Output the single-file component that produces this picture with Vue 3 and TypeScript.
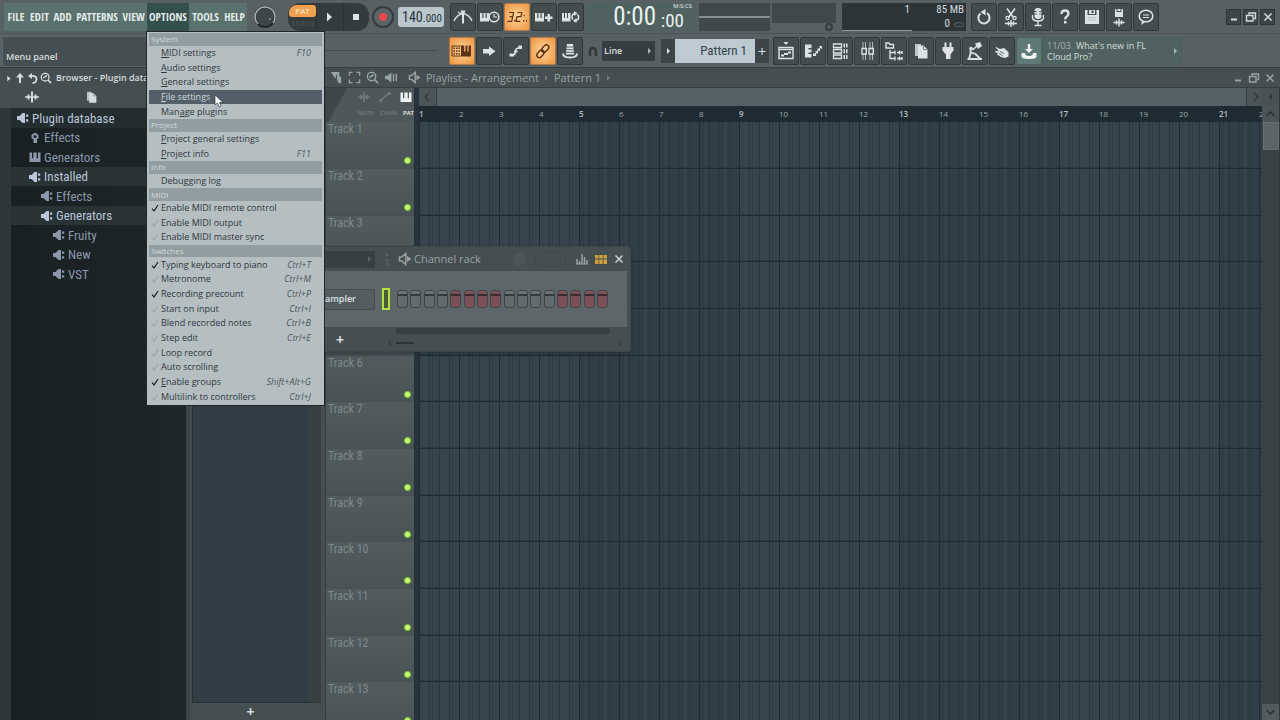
<script setup lang="ts">
interface MenuEntry {
  label: string
  keys?: string
  check?: boolean
  key?: number
}
interface MenuGroup {
  title: string
  items: MenuEntry[]
}
interface TreeRow {
  label: string
  icon: string
  level: number
  lit?: boolean
  open?: boolean
}

const mainMenu: string[] = ['FILE', 'EDIT', 'ADD', 'PATTERNS', 'VIEW', 'OPTIONS', 'TOOLS', 'HELP']

const groups: MenuGroup[] = [
  {
    title: 'System',
    items: [
      { label: 'MIDI settings', keys: 'F10', key: 0 },
      { label: 'Audio settings', key: 0 },
      { label: 'General settings', key: 0 },
      { label: 'File settings', key: 0 },
      { label: 'Manage plugins', key: 3 },
    ],
  },
  {
    title: 'Project',
    items: [
      { label: 'Project general settings', key: 0 },
      { label: 'Project info', keys: 'F11', key: 0 },
    ],
  },
  { title: 'Info', items: [{ label: 'Debugging log' }] },
  {
    title: 'MIDI',
    items: [
      { label: 'Enable MIDI remote control', check: true },
      { label: 'Enable MIDI output', check: false },
      { label: 'Enable MIDI master sync', check: false },
    ],
  },
  {
    title: 'Switches',
    items: [
      { label: 'Typing keyboard to piano', keys: 'Ctrl+T', check: true },
      { label: 'Metronome', keys: 'Ctrl+M', check: false },
      { label: 'Recording precount', keys: 'Ctrl+P', check: true },
      { label: 'Start on input', keys: 'Ctrl+I', check: false },
      { label: 'Blend recorded notes', keys: 'Ctrl+B', check: false },
      { label: 'Step edit', keys: 'Ctrl+E', check: false },
      { label: 'Loop record', check: false },
      { label: 'Auto scrolling', check: false },
      { label: 'Enable groups', keys: 'Shift+Alt+G', check: true, key: 0 },
      { label: 'Multilink to controllers', keys: 'Ctrl+J', check: false },
    ],
  },
]

const tree: TreeRow[] = [
  { label: 'Plugin database', icon: 'plug', level: 0, lit: true },
  { label: 'Effects', icon: 'fx', level: 1 },
  { label: 'Generators', icon: 'piano', level: 1 },
  { label: 'Installed', icon: 'plug', level: 1, lit: true, open: true },
  { label: 'Effects', icon: 'plug', level: 2 },
  { label: 'Generators', icon: 'plug', level: 2, lit: true, open: true },
  { label: 'Fruity', icon: 'plug', level: 3 },
  { label: 'New', icon: 'plug', level: 3 },
  { label: 'VST', icon: 'plug', level: 3 },
]

const recTools = [
  { icon: 'metro', name: 'Metronome' },
  { icon: 'wait', name: 'Wait for input' },
  { icon: 'count', name: 'Countdown', on: true },
  { icon: 'overdub', name: 'Overdub' },
  { icon: 'loop', name: 'Loop recording' },
]
const editTools = [
  { icon: 'typing', name: 'Typing keyboard', on: true },
  { icon: 'arrow', name: 'Step' },
  { icon: 'slide', name: 'Slide' },
  { icon: 'link', name: 'Link', on: true },
  { icon: 'hat', name: 'Multilink' },
]
const fileTools = [
  { icon: 'undo', name: 'Undo' },
  { icon: 'cut', name: 'Cut' },
  { icon: 'mic', name: 'Record audio' },
  { icon: 'help', name: 'Help' },
  { icon: 'save', name: 'Save' },
  { icon: 'render', name: 'Render' },
  { icon: 'chat', name: 'About' },
]
const viewTools = [
  { icon: 'playlist', name: 'Playlist' },
  { icon: 'roll', name: 'Piano roll' },
  { icon: 'rack', name: 'Channel rack' },
  { icon: 'mixer', name: 'Mixer' },
  { icon: 'browse', name: 'Browser' },
  { icon: 'file', name: 'Project' },
  { icon: 'plugv', name: 'Plugins' },
  { icon: 'tempo', name: 'Tempo tapper' },
  { icon: 'hand', name: 'Touch' },
]

const tracks: number[] = Array.from({ length: 13 }, (_, i) => i + 1)
const bars: number[] = Array.from({ length: 22 }, (_, i) => i + 1)
const steps: number[] = Array.from({ length: 16 }, (_, i) => i)
</script>

<template>
  <div class="daw">
    <svg class="defs" aria-hidden="true">
      <symbol id="i-metro" viewBox="0 0 24 24"><path d="M3 16Q6 9.500 12 8.500Q18 9.500 21 16M7 7l4 2.500" fill="none" stroke="currentColor" stroke-width="1.300" /><path d="M9.500 5.500h5l-1.500 4v9h-2v-9z" fill="currentColor" /></symbol>
      <symbol id="i-wait" viewBox="0 0 24 24"><path d="M2 8h2.300v5h1.200V8h2v5h1.200V8H11v8.500H2z" fill="currentColor" /><circle cx="16" cy="12" r="4.800" fill="none" stroke="currentColor" stroke-width="1.500" /><path d="M16 9v3h3" fill="none" stroke="currentColor" stroke-width="1.200" /></symbol>
      <symbol id="i-count" viewBox="0 0 24 24"><g fill="none" stroke="currentColor" stroke-width="1.200"><path d="M4 7.500h4.500l-.8 4.200H4.500M7.700 11.700l-1 4.600H2.500M12.500 7.500h4.300l-.8 4.200h-4l-.9 4.600h4.200" /></g><path d="M9 15h1.500v1.500H9zM18.500 10h1.300v1.300h-1.300zM18 15h1.300v1.500H18zM21 15h1v1.500h-1z" fill="currentColor" /></symbol>
      <symbol id="i-overdub" viewBox="0 0 24 24"><path d="M3 8h2.300v5h1.200V8h2v5h1.200V8H12v8.500H3zM15.500 9h2.500v2.500h2.500V14H18v2.500h-2.500V14H13v-2.500h2.500z" fill="currentColor" /></symbol>
      <symbol id="i-loop" viewBox="0 0 24 24"><path d="M3 8h2v5h1V8h2v5h1V8h2.500v8.500H3z" fill="currentColor" /><path d="M14 14.500a3.800 3.800 0 0 1 1.500-6.200M18.500 9.500a3.800 3.800 0 0 1-1.500 6.300" fill="none" stroke="currentColor" stroke-width="1.600" /><path d="M15 6l3.500 2.200L15 11zM17.500 13v5L14 15.700z" fill="currentColor" /></symbol>
      <symbol id="i-typing" viewBox="0 0 24 24"><path d="M2 7h9.500v10H2z" fill="none" stroke="currentColor" /><path d="M3.500 8.500H5V10H3.500zM6 8.500h1.500V10H6zM8.500 8.500H10V10H8.500zM3.500 11.200H5v1.500H3.500zM6 11.200h1.500v1.500H6zM8.500 11.200H10v1.500H8.500zM3.500 14H5v1.500H3.500zM6 14h1.500v1.500H6zM8.500 14H10v1.500H8.500zM12 6.500h2.200v6h1.200v-6h2v6h1.200v-6H21v11h-9z" fill="currentColor" /></symbol>
      <symbol id="i-arrow" viewBox="0 0 24 24"><path d="M6 10h6V7.500l6.500 4.700L12 17v-2.500H6z" fill="currentColor" /></symbol>
      <symbol id="i-slide" viewBox="0 0 24 24"><path d="M9 16q2 0 2.200-2.500l.6-2.500q.4-2 3.200-2" fill="none" stroke="currentColor" stroke-width="1.600" /><path d="M5.500 14.500h4.500v3H5.500zM14.500 6.500H18V10h-3.500zM10 11.500h3.500v2H10z" fill="currentColor" /></symbol>
      <symbol id="i-link" viewBox="0 0 24 24"><g fill="none" stroke="currentColor" stroke-width="1.400" transform="rotate(-48 12 12)"><rect x="4" y="9.500" width="8.500" height="5" rx="2.500" /><rect x="11" y="9.500" width="8.500" height="5" rx="2.500" /></g></symbol>
      <symbol id="i-hat" viewBox="0 0 24 24"><path d="M9 5h6l1.200 10.500H7.800z" fill="currentColor" /><path d="M5 14.500q0 4 7 4t7-4" fill="none" stroke="currentColor" stroke-width="1.800" /><path d="M8.500 8h7M8 10.700h8M8 13.400h8" stroke="#454d4f" stroke-width=".8" /></symbol>
      <symbol id="i-undo" viewBox="0 0 24 24"><path d="M8.500 8.500a5.600 5.600 0 1 0 6.500-.3" fill="none" stroke="currentColor" stroke-width="2" /><path d="M13.500 4v6.500L8.500 7z" fill="currentColor" /></symbol>
      <symbol id="i-cut" viewBox="0 0 24 24"><path d="M8 3.500l6.500 9M16 3.500l-6.500 9" stroke="currentColor" stroke-width="1.500" /><g fill="none" stroke="currentColor" stroke-width="1.300"><circle cx="8.500" cy="13" r="1.600" /><circle cx="15.500" cy="13" r="1.600" /></g><path d="M6 18.500h12M9.500 16.500v4M12 15v7M14.500 16.500v4" stroke="currentColor" stroke-width="1.500" /></symbol>
      <symbol id="i-mic" viewBox="0 0 24 24"><rect x="8.500" y="3" width="7" height="11" rx="3" fill="currentColor" /><path d="M8 6.500h3M8 9h3M13 6.500h3M13 9h3" stroke="#454d4f" stroke-width=".8" /><path d="M6.500 10v2.500q0 3.500 5.500 3.500t5.500-3.500V10M12 16v4M8.500 20.500h7" fill="none" stroke="currentColor" stroke-width="1.400" /></symbol>
      <symbol id="i-help" viewBox="0 0 24 24"><path d="M8.500 9q0-3.500 3.500-3.500t3.500 3.200q0 1.800-2 3-1.300.8-1.300 2.800" fill="none" stroke="currentColor" stroke-width="2.300" /><path d="M11 16h2.500v2.500H11z" fill="currentColor" /></symbol>
      <symbol id="i-save" viewBox="0 0 24 24"><path d="M5 5h2.500v5h9V5H19v14H5z" fill="currentColor" /><path d="M9 5h6v4H9z" fill="currentColor" /><path d="M11.500 5.500h2V8h-2z" fill="#3c4446" /><path d="M7.500 12.500h9M7.500 15h9" stroke="#b5bebf" /></symbol>
      <symbol id="i-render" viewBox="0 0 24 24"><path d="M8 4h1.500v3h5V4H16v8H8zM10.500 4h3v2h-3z" fill="currentColor" /><path d="M6.500 17.500h11M9.500 15.500v4M12 13.500v8M14.500 15.500v4" stroke="currentColor" stroke-width="1.500" /></symbol>
      <symbol id="i-chat" viewBox="0 0 24 24"><ellipse cx="12" cy="11" rx="6.800" ry="5.800" fill="none" stroke="currentColor" stroke-width="1.600" /><path d="M9 10h6M9 12.500h6" stroke="currentColor" stroke-width="1.200" /><path d="M8 16l-1 4 5-3.500z" fill="currentColor" /></symbol>
      <symbol id="i-playlist" viewBox="0 0 24 24"><path d="M9.500 3h5L12 6z" fill="currentColor" /><path d="M5 8.500h14v11H5z" fill="none" stroke="currentColor" stroke-width="1.400" /><path d="M5 10.500h14" stroke="currentColor" stroke-width="1.400" /><path d="M7 15.500h3v2H7zM10 14h4v2h-4zM14 12.500h3v2h-3z" fill="currentColor" /></symbol>
      <symbol id="i-roll" viewBox="0 0 24 24"><path d="M4 5.500h6.500V9H7.500v1.500h3v3h-3V15h3v3.500H4zM12 14.500h3V17h-3zM14.500 12h2.500v2.500h-2.500zM16.500 9.500H19V12h-2.500zM18.500 7H21v2.500h-2.500z" fill="currentColor" /></symbol>
      <symbol id="i-rack" viewBox="0 0 24 24"><path d="M5.500 5h8v3.500h-8zM5.500 10.500h8V14h-8zM5.500 16h8v3.500h-8z" fill="none" stroke="currentColor" stroke-width="1.300" /><path d="M15.500 4.500h1.500v4h-1.500zM18 4.500h1.500v4H18zM15.500 10.200h1.500v4h-1.500zM18 10.200h1.500v4H18zM15.500 16h1.500v4h-1.500zM18 16h1.500v4H18z" fill="currentColor" /></symbol>
      <symbol id="i-mixer" viewBox="0 0 24 24"><path d="M8 3v6M10.500 3v6M8 15v6M10.500 15v6M15 3v6M17.500 3v6M15 15v6M17.500 15v6" stroke="currentColor" stroke-width=".9" opacity=".8" /><path d="M7 9.500h4.300V15H7zM14 9.500h4.300V15H14z" fill="none" stroke="currentColor" stroke-width="1.400" /></symbol>
      <symbol id="i-browse" viewBox="0 0 24 24"><path d="M4 4h3l1 1.500h3.500V9H4zM8 11v8.500h5M8 13.500h5" fill="none" stroke="currentColor" stroke-width="1.400" /><path d="M13 11.500v4M15 13.500h5M17.500 11.500v4M13 17.500v4M15 19.500h5M17.500 17.500v4M20 12v3M20 18v3" stroke="currentColor" stroke-width="1.300" /></symbol>
      <symbol id="i-file" viewBox="0 0 24 24"><path d="M6 5h6v12H6z" fill="currentColor" opacity=".8" /><path d="M9 6.500h5.500L18.500 10.500v9H9z" fill="currentColor" /><path d="M14.500 6.500v4h4" stroke="#6d7577" fill="none" stroke-width=".8" /></symbol>
      <symbol id="i-plugv" viewBox="0 0 24 24"><path d="M8.500 3.500h2V8h3V3.500h2V8H17.500v3.500l-3 4V20h-4.500v-4.500l-3.500-4V8h2z" fill="currentColor" /></symbol>
      <symbol id="i-tempo" viewBox="0 0 24 24"><path d="M12 4.500l5-1.500 2 4-4 3z" fill="currentColor" /><path d="M14 7L9.500 11" stroke="currentColor" stroke-width="1.500" /><circle cx="8" cy="9.500" r="1.800" fill="currentColor" /><path d="M7.500 11v4L6 19.500M8 13.500l4.500 1.500 5 5M4.500 20H19" stroke="currentColor" stroke-width="1.800" fill="none" /></symbol>
      <symbol id="i-hand" viewBox="0 0 24 24"><path d="M5 7.500l5 2.500 4-1 4.500 4v4.500L15 19l-4-1-4-2.500 1-1-3-1.500 1-1.300 3 .8z" fill="currentColor" /><path d="M10 12.500l4 2M9 14.500l3.500 2" stroke="#454d4f" stroke-width=".8" /></symbol>
      <symbol id="i-down" viewBox="0 0 24 24"><path d="M10.800 5h2.400v5H16l-4 4-4-4h2.800z" fill="currentColor" /><path d="M4.500 14H8q0 3 4 3t4-3h3.500v3.500q0 2.500-7.500 2.500t-7.500-2.500z" fill="currentColor" /></symbol>
      <symbol id="i-plug" viewBox="0 0 14 12"><path d="M1 4h2.500L6.500 1H9v10H6.500l-3-3H1z" fill="currentColor" /><path d="M10 2.500h2.200v2.300H10zM10 7.200h2.200v2.300H10z" fill="currentColor" /></symbol>
      <symbol id="i-fx" viewBox="0 0 14 12"><path d="M3.500 3L7 .5 10.500 3v3.500L9 7v4H5.500V7l-2-.5z" fill="currentColor" /><circle cx="7" cy="4.500" r="1.500" fill="#1b2326" /></symbol>
      <symbol id="i-piano" viewBox="0 0 14 12"><path d="M1.500 1.500H4v5.800h1.300V1.500h3.400v5.800H10V1.500h2.500v9.500h-11z" fill="currentColor" /></symbol>
      <symbol id="i-wave" viewBox="0 0 16 14"><path d="M1 7h14" stroke="currentColor" stroke-width="1.500" /><path d="M4.500 4.500v5M8 1.500v11M11.500 4.500v5" stroke="currentColor" stroke-width="2" /></symbol>
      <symbol id="i-mag" viewBox="0 0 14 14"><circle cx="6" cy="6" r="4.500" fill="none" stroke="currentColor" stroke-width="1.500" /><path d="M4 7l4-3M9.500 9.500L13 13" stroke="currentColor" stroke-width="1.800" /></symbol>
      <symbol id="i-speaker" viewBox="0 0 14 14"><path d="M1.500 5h2.300l4-3.500v11l-4-3.500H1.500z" fill="none" stroke="currentColor" stroke-width="1.500" /><path d="M9 4L13.500 7 9 10z" fill="currentColor" /></symbol>
      <symbol id="i-close" viewBox="0 0 12 12"><path d="M2.500 2.500l7 7M9.500 2.500l-7 7" stroke="currentColor" stroke-width="1.500" /></symbol>
      <symbol id="i-restore" viewBox="0 0 12 12"><path d="M4 3.500V2h6.500v5.500H9M1.500 4.500H8V10H1.500z" fill="none" stroke="currentColor" stroke-width="1.400" /></symbol>
      <symbol id="i-min" viewBox="0 0 12 12"><path d="M3 8.500h6" stroke="currentColor" stroke-width="2" /></symbol>
    </svg>

    <header class="top">
      <div class="bar first">
        <nav class="menubar" aria-label="Main menu">
          <button v-for="m in mainMenu" :key="m" type="button" :class="{ active: m === 'OPTIONS' }">{{ m }}</button>
        </nav>
        <svg class="knob" viewBox="0 0 30 28" aria-hidden="true">
          <circle cx="15" cy="14" r="10" fill="#3e4649" stroke="#22292b" stroke-width="2" />
          <path d="M8 21A10 10 0 1 1 23 20" fill="none" stroke="#a9b6b8" stroke-width="1.500" />
          <circle cx="20" cy="16" r="1" fill="#859092" />
        </svg>
        <div class="transport">
          <div class="mode"><span class="pat">PAT</span><span class="song">SONG</span></div>
          <button type="button" aria-label="Play"><svg viewBox="0 0 12 12"><path d="M3 1.500L8 6 3 10.500z" fill="#dfe5e5" /></svg></button>
          <button type="button" aria-label="Stop"><svg viewBox="0 0 12 12"><path d="M3 3h6v6H3z" fill="#dfe5e5" /></svg></button>
        </div>
        <button class="record" type="button" aria-label="Record"><i></i></button>
        <div class="tempo">140<small>.000</small></div>
        <div class="tools">
          <button v-for="t in recTools" :key="t.icon" type="button" class="tool" :class="{ on: t.on }" :aria-label="t.name">
            <svg><use :href="'#i-' + t.icon" /></svg>
          </button>
        </div>
        <div class="clock">
          <span class="big">0:00</span>
          <div class="side"><span class="unit">M:S:CS</span><span class="sec">:00</span></div>
        </div>
        <div class="scope"></div>
        <div class="meter"><div></div><i></i></div>
        <div class="cpu"><span>1</span><span>85 MB</span><span></span><span>0<i></i></span></div>
        <div class="tools">
          <button v-for="t in fileTools" :key="t.icon" type="button" class="tool" :aria-label="t.name">
            <svg><use :href="'#i-' + t.icon" /></svg>
          </button>
        </div>
        <div class="window">
          <button type="button" aria-label="Minimize"><svg><use href="#i-min" /></svg></button>
          <button type="button" aria-label="Restore"><svg><use href="#i-restore" /></svg></button>
          <button type="button" aria-label="Close"><svg><use href="#i-close" /></svg></button>
        </div>
      </div>
      <div class="bar second">
        <div class="hint">Menu panel</div>
        <div class="groove"></div>
        <div class="tools">
          <button v-for="t in editTools" :key="t.icon" type="button" class="tool" :class="{ on: t.on }" :aria-label="t.name">
            <svg><use :href="'#i-' + t.icon" /></svg>
          </button>
        </div>
        <svg class="magnet" viewBox="0 0 12 14" aria-hidden="true"><path d="M3 12V7a3 3 0 0 1 6 0v5" fill="none" stroke="#31393c" stroke-width="2.500" /></svg>
        <div class="snap">
          <select aria-label="Snap"><option>Line</option></select>
          <b></b>
        </div>
        <div class="pattern">
          <button type="button" aria-label="Pattern menu"><b></b></button>
          <select aria-label="Pattern"><option>Pattern 1</option></select>
          <button type="button">+</button>
        </div>
        <div class="tools">
          <button v-for="t in viewTools" :key="t.icon" type="button" class="tool" :aria-label="t.name">
            <svg><use :href="'#i-' + t.icon" /></svg>
          </button>
          <button type="button" class="tool teal" aria-label="Download"><svg><use href="#i-down" /></svg></button>
        </div>
        <a class="news" href="#"><span><em>11/03</em>What's new in FL<br>Cloud Pro?</span><b></b></a>
      </div>
    </header>

    <main class="work">
      <aside class="browser">
        <div class="bhead">
          <div class="btitle">
            <svg class="tri" viewBox="0 0 6 8"><path d="M1 1l4 3-4 3z" fill="currentColor" /></svg>
            <svg viewBox="0 0 12 12"><path d="M6 1l4 4.500H7V11H5V5.500H2z" fill="currentColor" /></svg>
            <svg viewBox="0 0 12 12"><path d="M5 1v6L1 4z" fill="currentColor" /><path d="M4 4q6-.5 5.500 3.500Q9 11 5.500 11" fill="none" stroke="currentColor" stroke-width="1.800" /></svg>
            <svg><use href="#i-mag" /></svg>
            <span>Browser - Plugin database</span>
          </div>
          <div class="btabs">
            <button type="button" aria-label="Sounds"><svg><use href="#i-wave" /></svg></button>
            <button type="button" aria-label="Files"><svg><use href="#i-file" /></svg></button>
          </div>
        </div>
        <ul class="tree">
          <li v-for="(r, i) in tree" :key="i" :class="['lv' + r.level, { lit: r.lit, open: r.open }]">
            <svg><use :href="'#i-' + r.icon" /></svg><span>{{ r.label }}</span>
          </li>
        </ul>
      </aside>

      <section class="playlist">
        <div class="ptitle">
          <svg viewBox="0 0 14 14"><path d="M1 1h9v4l2 2v6H9L7 8 5 7z" fill="currentColor" /><path d="M7 4v5" stroke="#454e50" /></svg>
          <svg viewBox="0 0 14 14"><path d="M1.500 5V1.500H5M9 1.500h3.500V5M12.500 9v3.500H9M5 12.500H1.500V9" fill="none" stroke="currentColor" stroke-width="1.500" /></svg>
          <svg><use href="#i-mag" /></svg>
          <svg viewBox="0 0 14 14"><path d="M1 5h2.500L8 1.500v11L3.500 9H1zM9.500 3H11v8H9.500zM12.500 3H14v8h-1.500z" fill="currentColor" /></svg>
          <svg class="spk"><use href="#i-speaker" /></svg>
          <span class="name">Playlist - Arrangement</span><b></b><span class="name">Pattern 1</span><b></b>
          <div class="pwin">
            <svg><use href="#i-min" /></svg><svg><use href="#i-restore" /></svg><svg><use href="#i-close" /></svg>
          </div>
        </div>
        <div class="pbody">
          <div class="picker"><div class="clips"></div><button type="button" aria-label="Add pattern">+</button></div>
          <div class="heads">
            <div class="modes">
              <div class="micons"><svg><use href="#i-wave" /></svg><svg viewBox="0 0 16 14"><path d="M3 11l9-8" stroke="currentColor" stroke-width="1.500" /><circle cx="3" cy="11" r="2" fill="currentColor" /><circle cx="13" cy="3" r="2" fill="currentColor" /></svg><svg class="hot"><use href="#i-piano" /></svg></div>
              <div class="mtext"><span>NOTE</span><span>CHAN</span><span class="hot">PAT</span></div>
            </div>
            <div v-for="t in tracks" :key="t" class="thead"><span>Track {{ t }}</span><i></i></div>
          </div>
          <div class="arr">
            <div class="hscroll">
              <svg viewBox="0 0 12 12"><path d="M8 2L4 6l4 4" fill="none" stroke="currentColor" stroke-width="1.300" /></svg>
              <div class="thumb"></div>
              <svg viewBox="0 0 12 12"><path d="M4 2l4 4-4 4" fill="none" stroke="currentColor" stroke-width="1.300" /></svg>
            </div>
            <div class="ruler"><span v-for="b in bars" :key="b" :class="{ strong: b % 4 === 1 }">{{ b }}</span></div>
            <div class="lanes"><div v-for="t in tracks" :key="t" class="lane"></div></div>
          </div>
          <div class="vscroll">
            <div class="corner"><b></b></div>
            <svg viewBox="0 0 12 12"><path d="M2 8l4-4 4 4" fill="none" stroke="currentColor" stroke-width="1.300" /></svg>
            <div class="vthumb"></div>
            <svg class="vdown" viewBox="0 0 12 12"><path d="M2 4l4 4 4-4" fill="none" stroke="currentColor" stroke-width="1.300" /></svg>
          </div>
        </div>
      </section>
    </main>

    <section class="rackwin" aria-label="Channel rack">
      <div class="rtitle">
        <div class="combo"><b></b></div>
        <i class="dots"></i>
        <svg class="spk"><use href="#i-speaker" /></svg>
        <span>Channel rack</span>
        <i class="swing"></i><i class="pill"></i>
        <svg class="graph" viewBox="0 0 14 12"><path d="M2 6v5M4.500 8v3M7 1v10M9.500 4v7M12 7v4" stroke="currentColor" stroke-width="1.500" /><path d="M1 11h12" stroke="currentColor" /></svg>
        <svg class="graph gold" viewBox="0 0 14 12"><path d="M1 2h3.500v3.500H1zM5.200 2h3.500v3.500H5.200zM9.500 2H13v3.500H9.500zM1 6.500h3.500V11H1zM5.200 6.500h3.500V11H5.200zM9.500 6.500H13V11H9.500z" fill="currentColor" /></svg>
        <svg class="x"><use href="#i-close" /></svg>
      </div>
      <div class="rbody">
        <button class="sampler" type="button">Sampler</button>
        <i class="sel"></i>
        <div class="steps"><button v-for="s in steps" :key="s" type="button" :aria-label="'Step ' + (s + 1)" :class="{ red: s % 8 > 3 }"></button></div>
      </div>
      <div class="rfoot">
        <button type="button" aria-label="Add channel">+</button>
        <div class="rbars">
          <div class="wide"></div>
          <div class="mini"><span>‹</span><i></i><span class="end">›</span></div>
        </div>
      </div>
    </section>

    <div class="dropdown" role="menu" aria-label="Options">
      <template v-for="g in groups" :key="g.title">
        <div class="gtitle">{{ g.title }}</div>
        <button
          v-for="it in g.items"
          :key="it.label"
          type="button"
          :role="it.check === undefined ? 'menuitem' : 'menuitemcheckbox'"
          :aria-checked="it.check"
          :class="{ hover: it.label === 'File settings' }"
        >
          <svg v-if="it.check !== undefined" :class="{ ticked: it.check }" viewBox="0 0 8 8"><path d="M1 4.500L3 7l4-6" fill="none" stroke="currentColor" stroke-width="1.200" /></svg>
          <span v-if="it.key !== undefined" class="lbl">{{ it.label.slice(0, it.key) }}<u>{{ it.label[it.key] }}</u>{{ it.label.slice(it.key + 1) }}</span>
          <span v-else class="lbl">{{ it.label }}</span>
          <kbd v-if="it.keys">{{ it.keys }}</kbd>
        </button>
      </template>
    </div>

    <svg class="pointer" viewBox="0 0 10 14" aria-hidden="true"><path d="M1 1v10l2.500-2 1.500 4 2-1-1.500-3.500H9z" fill="#fff" stroke="#333b3e" stroke-width=".7" /></svg>
  </div>
</template>

<style>
html,
body {
  background: #454e50;
}
</style>

<style scoped>
.daw {
  --narrow: "Roboto Condensed", "Liberation Sans Narrow", "Open Sans Condensed", "DejaVu Sans Condensed", sans-serif;
  position: relative;
  display: flex;
  flex-direction: column;
  height: 100vh;
  overflow: hidden;
  background: #454e50;
  color: #d5dddd;
  font: 9px/12px "Open Sans", "Noto Sans", sans-serif;
}
.defs { position: absolute; width: 0; height: 0; }
.daw *, .daw { box-sizing: border-box; }
svg { display: block; flex: none; width: 12px; height: 12px; }
button, select {
  margin: 0;
  padding: 0;
  border: 0;
  background: none;
  color: inherit;
  font: inherit;
}
b {
  display: block;
  flex: none;
  width: 0;
  height: 0;
  border: solid transparent;
  border-width: 3px 0 3px 3px;
  border-left-color: #a9b3b4;
}

/* toolbars */
.top { flex: none; background: #576163; border-bottom: 1px solid #343c3e; }
.bar { display: flex; align-items: center; height: 33px; }
.second { height: 34px; border-top: 1px solid #4b5456; }
.menubar {
  display: grid;
  grid-template-columns: 24px 23px 23px 46px 27px 42px 33px 25px;
  flex: none;
  height: 28px;
  margin-left: 4px;
  background: #5a716d;
  color: #e3ecea;
  font: 11px/28px "Open Sans Condensed", "Roboto Condensed", "Liberation Sans Narrow", sans-serif;
}
.menubar button { white-space: nowrap; }
.menubar .active { background: #34504d; }
.knob { width: 30px; height: 28px; margin: 0 8px 0 3px; }
.transport {
  display: flex;
  align-items: center;
  flex: none;
  width: 81px;
  height: 28px;
  border-radius: 12px;
  background: #333b3e;
}
.transport button { flex: 1; display: grid; place-items: center; height: 28px; border-left: 1px solid #2a3234; }
.mode { flex: none; width: 28px; font: 8px/12px "Open Sans", sans-serif; text-align: center; }
.mode span { display: block; margin-left: 1px; }
.pat { border-radius: 8px 3px 3px 3px; background: #f0a04f; color: #fff3df; }
.song { color: #50585a; }
.record { display: grid; place-items: center; flex: none; width: 22px; height: 22px; margin: 0 4px 0 3px; border: 2px solid #343c3f; border-radius: 50%; background: #5b6466; }
.record i { width: 8px; height: 8px; border-radius: 50%; background: #e5484f; }
.tempo {
  flex: none;
  display: flex;
  align-items: baseline;
  width: 46px;
  height: 20px;
  padding-left: 4px;
  border-radius: 3px;
  background: #b9c7cd;
  color: #27343b;
  font: 14px/20px var(--narrow);
}
.tempo small { font-size: 11px; }
.tools { display: flex; flex: none; gap: 1px; }
.tool {
  display: grid;
  place-items: center;
  width: 26px;
  height: 28px;
  border: 1px solid #2f3739;
  border-radius: 2px;
  background: #444c4e;
  color: #dde3e3;
}
.tool svg { width: 24px; height: 24px; }
.tool.on { background: radial-gradient(#ffd49a, #ee9440); border-color: #b87a42; color: #5d3413; }
.tool.teal { background: #5f7976; border-color: #4b5f5d; color: #f0f5f4; }
.first .tempo + .tools { margin-left: 6px; }
.clock {
  flex: none;
  display: flex;
  justify-content: flex-end;
  width: 110px;
  height: 28px;
  margin-left: 2px;
  padding-right: 4px;
  background: #50625f;
  color: #eaf2f0;
  font: 25px/28px var(--narrow);
}
.side { display: flex; flex-direction: column; align-items: flex-end; width: 36px; }
.unit { font: 6px/7px "Open Sans", sans-serif; }
.sec { padding-right: 8px; font-size: 19px; line-height: 21px; }
.scope { flex: none; width: 71px; height: 28px; margin-left: 3px; background: linear-gradient(#869092, #869092) 0 13px / 100% 2px no-repeat #3f484a; }
.meter { flex: none; width: 64px; height: 28px; margin-left: 2px; }
.meter div { height: 20px; background: #3f484a; }
.meter i { display: block; width: 8px; height: 8px; margin-left: auto; margin-right: 3px; border: 2px solid #343c3e; border-radius: 50%; }
.cpu {
  flex: none;
  display: grid;
  grid-template: 14px 14px / 1fr 54px;
  width: 124px;
  margin-left: 6px;
  padding: 0 2px;
  background: linear-gradient(#8c9697, #8c9697) 0 27px / 70px 1px no-repeat #2b3437;
  font: 11px/14px var(--narrow);
  text-align: right;
}
.cpu i { display: inline-block; width: 10px; height: 5px; margin-left: 4px; border: 1px solid #566062; border-radius: 50%; }
.cpu + .tools { margin-left: 5px; }
.window { display: flex; gap: 2px; margin: 0 5px 0 auto; }
.window button { display: grid; place-items: center; width: 15px; height: 16px; border: 1px solid #2d3537; background: #3d4547; }
.hint { flex: none; align-self: stretch; width: 322px; margin: 2px 0 0 2px; padding: 13px 0 0 3px; border: 1px solid #5e686a; background: #454e50; font-size: 9px; font-weight: 600; line-height: 14px; }
.groove { flex: none; width: 114px; height: 1px; margin-right: 11px; background: #434c4e; }
.magnet { width: 12px; height: 14px; margin: 0 3px 0 4px; }
.snap, .pattern { display: flex; align-items: center; flex: none; }
.snap { width: 53px; height: 20px; padding-right: 4px; background: #353d40; }
.snap select { flex: 1; min-width: 0; height: 20px; padding-left: 2px; appearance: none; font-size: 9px; font-weight: 600; }
.pattern { margin: 0 4px 0 6px; height: 24px; }
.pattern button { display: grid; place-items: center; width: 14px; height: 24px; background: #3c4446; font-size: 15px; }
.pattern b { border-left-color: #dde4e4; }
.pattern select {
  width: 80px;
  height: 24px;
  padding-right: 8px;
  appearance: none;
  background: #bdcad1;
  color: #35434b;
  font: 13px/24px var(--narrow);
  text-align-last: right;
}
.news { flex: none; display: flex; justify-content: space-between; align-items: center; width: 140px; height: 28px; padding: 0 4px 0 4px; border: 1px solid #4c5e5b; background: #50625f; color: #d4dedc; font-size: 9px; line-height: 11px; text-decoration: none; }
.news em { margin-right: 5px; color: #a3b2af; font-style: normal; }

/* browser */
.work { flex: 1; display: flex; min-height: 0; }
.browser { flex: none; display: flex; flex-direction: column; width: 190px; border-right: 4px solid #3c4446; }
.bhead { flex: none; height: 40px; background: #454e50; }
.btitle { display: flex; align-items: center; height: 20px; padding-left: 6px; font-weight: 600; white-space: nowrap; overflow: hidden; }
.btitle svg { margin-right: 1px; }
.btitle .tri { width: 6px; height: 7px; margin-right: 2px; }
.btitle span { margin-left: 3px; }
.btabs { display: flex; gap: 42px; padding-left: 24px; }
.btabs button { height: 18px; }
.btabs svg { width: 16px; height: 14px; }
.btabs button + button svg { width: 19px; height: 18px; }
.tree {
  flex: 1;
  margin: 0;
  padding: 0;
  border-left: 11px solid #2d3639;
  list-style: none;
  background: linear-gradient(90deg, #182022, #1e2629);
  color: #8b98ac;
  font: 13px/19px var(--narrow);
}
.tree li { display: flex; align-items: center; gap: 2px; height: 19px; }
.tree li:nth-child(odd) { height: 20px; }
.tree svg { width: 14px; height: 12px; }
.tree .lit { color: #b9c6da; background: #232c2f; }
.tree .open { background: #293235; }
.lv0 { padding-left: 5px; }
.lv1 { padding-left: 17px; }
.lv2 { padding-left: 29px; }
.lv3 { padding-left: 41px; }

/* playlist */
.playlist { flex: 1; display: flex; flex-direction: column; min-width: 0; }
.ptitle { display: flex; align-items: center; flex: none; height: 20px; padding-left: 140px; border-bottom: 1px solid #363e40; color: #98a3a4; font-size: 11px; white-space: nowrap; }
.ptitle svg { width: 13px; height: 13px; margin-right: 5px; }
.ptitle .spk { margin: 0 5px 0 6px; }
.ptitle b { margin: 0 6px; border-left-color: #727c7e; }
.pwin { display: flex; gap: 4px; margin: 0 4px 0 auto; }
.pwin svg { width: 12px; height: 12px; margin: 0; }
.pbody { flex: 1; display: flex; min-height: 0; overflow: hidden; }
.picker { flex: none; display: flex; flex-direction: column; width: 136px; padding: 0 4px 0 2px; border-right: 1px solid #343c3e; }
.clips { flex: 1; border: 1px solid #262f33; border-right: 13px solid #364042; background: #323d45; }
.picker button { height: 17px; padding-right: 12px; font-size: 14px; font-weight: 700; line-height: 17px; }
.heads { flex: none; width: 93px; border-right: 5px solid #27333a; }
.modes { height: 34px; padding-top: 3px; background: linear-gradient(119deg, #3e4648 18px, #4e585a 19px); color: #727c7d; }
.modes .hot { color: #edf2f2; }
.micons { display: flex; justify-content: flex-end; gap: 7px; padding-right: 1px; }
.micons svg { width: 14px; height: 12px; }
.mtext { display: flex; justify-content: flex-end; gap: 6px; font: 6px/8px "Open Sans", sans-serif; margin-top: 6px; font-weight: 600; }
.thead, .lane { height: 47px; }
.thead:nth-child(3n + 1), .lane:nth-child(3n) { height: 46px; }
.thead {
  display: flex;
  justify-content: space-between;
  border-bottom: 1px solid #475052;
  background: linear-gradient(#525c5e, #495355);
  color: #7d8889;
  padding: 0 3px 0 2px;
  font: 12px/14px var(--narrow);
}
.thead i { width: 7px; height: 7px; margin-top: 35px; border: 1px solid #7fb84a; border-radius: 50%; background: #c6ff6e; box-shadow: 0 0 2px #4f7f2c; }
.arr { flex: 1; display: flex; flex-direction: column; min-width: 0; }
.hscroll { display: flex; align-items: center; flex: none; height: 18px; gap: 3px; padding-left: 2px; color: #2f383a; background: #4b5557; }
.thumb { flex: 1; height: 18px; background: #556164; border: solid #363f41; border-width: 0 1px; }
.ruler { display: flex; flex: none; height: 16px; overflow: hidden; background: #1e2b32; color: #9aa8ad; font: 8px/16px "Open Sans", sans-serif; }
.ruler span { flex: 0 0 40px; }
.ruler .strong { font-weight: 600; color: #b3c0c4; }
.lanes {
  flex: 1;
  min-height: 0;
  overflow: hidden;
  background:
    repeating-linear-gradient(90deg, #1f2b33 0 1px, transparent 1px 40px),
    repeating-linear-gradient(90deg, #2a3740 0 1px, transparent 1px 10px),
    repeating-linear-gradient(90deg, transparent 0 6px, #3a4952 6px 7px, transparent 7px 13px, #2f3d46 13px 14px, transparent 14px 20px),
    repeating-linear-gradient(90deg, #35444d 0 160px, #303e48 160px 320px);
}
.lane { border-bottom: 1px solid #1f2c34; box-shadow: inset 0 -1px #2b3942; }
.vscroll { flex: none; display: flex; flex-direction: column; align-items: center; width: 18px; border-right: 1px solid #2f3739; background: #394244; color: #262e30; }
.corner { display: grid; place-items: center; width: 100%; height: 18px; background: #485153; }
.corner b { transform: rotate(180deg); border-left-color: #2b3335; }
.vscroll svg { width: 17px; height: 16px; padding: 2px; background: #4a5355; }
.vthumb { width: 16px; height: 28px; background: #5b6567; border: 1px solid #667072; }
.vscroll .vdown { margin-top: auto; background: #525c5e; }

/* channel rack window */
.rackwin { position: absolute; top: 246px; left: 226px; width: 405px; border: 1px solid #3d4648; border-radius: 3px; background: #454e50; box-shadow: 0 2px 4px #1e282e88; }
.rtitle { display: flex; align-items: center; height: 24px; color: #98a3a4; font-size: 11px; white-space: nowrap; }
.combo { display: flex; justify-content: flex-end; align-items: center; width: 148px; height: 17px; padding-right: 4px; background: #363f41; }
.combo b { border-left-color: #596365; }
.dots { width: 2px; height: 11px; margin: 0 10px 0 11px; border-left: 2px dotted #5b6567; }
.rtitle .spk { width: 14px; height: 14px; margin-right: 2px; }
.swing { width: 16px; height: 16px; margin-left: auto; border-radius: 50%; background: #4c5557; border: 1px solid #424b4d; }
.pill { width: 31px; height: 15px; margin: 0 9px 0 8px; border: 1px solid #3f484a; border-radius: 6px; }
.graph { width: 14px; height: 12px; margin-right: 5px; }
.gold { color: #cfa13c; }
.rtitle .x { width: 12px; height: 12px; margin: 0 5px 0 0; color: #c9d1d1; }
.rbody { display: flex; align-items: center; height: 56px; margin-right: 3px; padding-left: 50px; background: #5d6769; }
.sampler { width: 98px; height: 21px; padding-right: 18px; border: 1px solid #434c4e; border-radius: 2px; background: #535d5f; color: #dce3e3; font-size: 9px; font-weight: 600; text-align: right; }
.sel { width: 8px; height: 22px; margin: 0 7px 0 7px; border: 2px solid #b3e33f; background: #4a5a3a; }
.steps { display: flex; justify-content: space-between; width: 211px; }
.steps button { width: 11px; height: 18px; border: 1px solid #3f474a; border-radius: 3px; background: linear-gradient(#6a7375 0 3px, #343b3d 3px 5px, #626b6d 5px); }
.steps .red { background: linear-gradient(#7d5257 0 3px, #3a2a2e 3px 5px, #7c4f56 5px); }
.rfoot { display: flex; height: 24px; padding-left: 107px; }
.rfoot button { width: 12px; font-size: 14px; font-weight: 700; line-height: 23px; }
.rbars { width: 234px; margin-left: 42px; }
.wide { width: 214px; height: 6px; margin: 1px 0 0 8px; border-radius: 2px; background: #363e40; }
.mini { display: flex; align-items: center; gap: 4px; height: 17px; color: #2c3436; font-size: 12px; }
.mini i { width: 18px; height: 2px; background: #2c3436; }
.mini .end { margin-left: auto; }

/* options menu */
.dropdown {
  position: absolute;
  top: 31px;
  left: 146px;
  display: flex;
  flex-direction: column;
  width: 179px;
  height: 375px;
  padding: 1px;
  border: 1px solid #1f2729;
  background: #b5bfc2;
  color: #2f383c;
}
.gtitle { flex: 13 1 0; display: flex; align-items: center; min-height: 0; margin: 0 1px; padding-left: 2px; background: #929da1; color: #d3dcde; font-size: 8px; line-height: 8px; }
.dropdown button { flex: 15 1 0; display: flex; align-items: center; min-height: 0; margin: 0 1px; padding: 0 11px 0 2px; text-align: left; line-height: 10px; }
.dropdown svg { width: 8px; height: 8px; margin-right: -8px; color: #9aa5a8; }
.dropdown .ticked { color: #161d20; }
.lbl { flex: 1; padding-left: 10px; white-space: nowrap; }
kbd { font: italic 9px/10px "Open Sans", "Noto Sans", sans-serif; color: #4c565a; }
.dropdown .hover { background: #53606a; color: #ced8dc; }
.pointer { position: absolute; top: 94px; left: 214px; width: 10px; height: 14px; }
</style>
